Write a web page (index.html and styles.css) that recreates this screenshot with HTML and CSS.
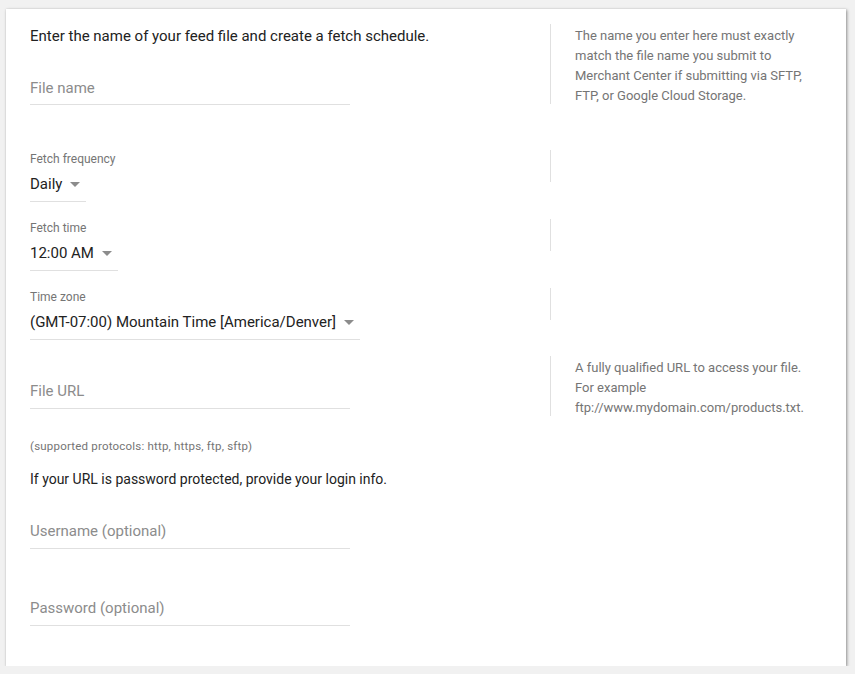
FILE: index.html
```html
<!DOCTYPE html>
<html>
<head>
<meta charset="utf-8">
<link rel="stylesheet" href="styles.css">
</head>
<body>
<div class="card">
  <div class="row row-name">
    <div class="main">
      <div class="intro">Enter the name of your feed file and create a fetch schedule.</div>
      <input class="field field-name" type="text" placeholder="File name">
    </div>
    <div class="help help-4">The name you enter here must exactly match the file name you submit to Merchant Center if submitting via SFTP, FTP, or Google Cloud Storage.</div>
  </div>

  <div class="row row-freq">
    <div class="main">
      <div class="label">Fetch frequency</div>
      <div class="select"><span>Daily</span><i class="caret"></i></div>
    </div>
    <div class="help help-empty"></div>
  </div>

  <div class="row row-gap">
    <div class="main">
      <div class="label">Fetch time</div>
      <div class="select"><span>12:00 AM</span><i class="caret"></i></div>
    </div>
    <div class="help help-empty"></div>
  </div>

  <div class="row row-gap">
    <div class="main">
      <div class="label">Time zone</div>
      <div class="select"><span>(GMT-07:00) Mountain Time [America/Denver]</span><i class="caret"></i></div>
    </div>
    <div class="help help-empty"></div>
  </div>

  <div class="row row-url">
    <div class="main">
      <input class="field field-url" type="text" placeholder="File URL">
    </div>
    <div class="help help-3">A fully qualified URL to access your file. For example ftp://www.mydomain.com/products.txt.</div>
  </div>

  <div class="hint">(supported protocols: http, https, ftp, sftp)</div>
  <div class="note">If your URL is password protected, provide your login info.</div>
  <input class="field field-user" type="text" placeholder="Username (optional)">
  <input class="field field-pass" type="password" placeholder="Password (optional)">
</div>
</body>
</html>
```

FILE: styles.css
```css
html, body {
  margin: 0;
  padding: 0;
}
body {
  background: #f1f1f1;
  padding: 9px 9px 0 6px;
  font-family: Roboto, "Liberation Sans", Arial, sans-serif;
  color: #212121;
}
.card {
  width: 840px;
  box-sizing: border-box;
  background: #fff;
  padding: 15px 24px 40px 24px;
  box-shadow: 1px 1px 3px rgba(0,0,0,0.4), 0 0 1px rgba(0,0,0,0.12);
}
.row {
  display: flex;
  align-items: flex-start;
}
.main {
  width: 520px;
  flex: none;
}
.row-freq { margin-top: 45px; }
.row-gap { margin-top: 17px; }
.row-url { margin-top: 16px; }

.intro {
  font-size: 15px;
  line-height: 24px;
  color: #222;
}
.field {
  display: block;
  width: 320px;
  height: 24px;
  box-sizing: content-box;
  margin: 0;
  padding: 28px 0 4px 0;
  border: 0;
  border-bottom: 1px solid #e0e0e0;
  outline: none;
  background: transparent;
  font-family: inherit;
  font-size: 15px;
  line-height: 24px;
  color: #222;
}
.field::placeholder {
  color: #8c8c8c;
  opacity: 1;
}
.field-url { padding: 23px 0 5px 0; }
.field-user { padding: 28px 0 5px 0; }
.field-pass { padding: 47px 0 5px 0; }

.label {
  font-size: 12px;
  line-height: 16px;
  padding-top: 1px;
  color: #757575;
}
.select {
  display: inline-flex;
  align-items: center;
  margin-top: 5px;
  padding: 0 6px 5px 0;
  border-bottom: 1px solid #e0e0e0;
  font-size: 15px;
  line-height: 24px;
  color: #222;
}
.caret {
  display: block;
  margin-left: 8px;
  width: 0;
  height: 0;
  border-left: 5px solid transparent;
  border-right: 5px solid transparent;
  border-top: 5px solid #8c8c8c;
}

.help {
  border-left: 1px solid #e0e0e0;
  padding-left: 24px;
  width: 250px;
  font-size: 13px;
  line-height: 20px;
  color: #757575;
}
.help-4 { height: 78px; padding-top: 2px; }
.help-3 { height: 58px; padding-top: 2px; }
.help-empty { height: 32px; }

.hint {
  margin-top: 22px;
  font-size: 11.5px;
  letter-spacing: 0.2px;
  line-height: 16px;
  color: #757575;
}
.note {
  margin-top: 13px;
  font-size: 14px;
  line-height: 24px;
  color: #222;
}
```
